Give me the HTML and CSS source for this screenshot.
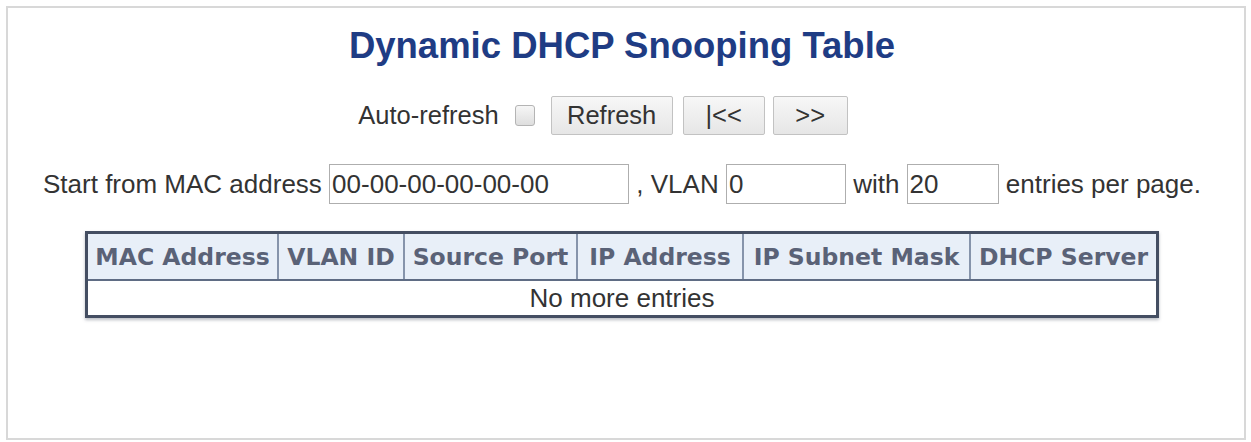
FILE: index.html
```html
<!DOCTYPE html>
<html lang="en">
<head>
<meta charset="utf-8">
<title>Dynamic DHCP Snooping Table</title>
<link rel="stylesheet" href="styles.css">
</head>
<body>
<div class="frame">
  <h1 class="title">Dynamic DHCP Snooping Table</h1>

  <div class="controls">
    <label class="auto">Auto-refresh <input type="checkbox" class="check"></label>
    <button class="btn btn-refresh" type="button">Refresh</button>
    <button class="btn btn-first" type="button">|&lt;&lt;</button>
    <button class="btn btn-next" type="button">&gt;&gt;</button>
  </div>

  <div class="paging">Start from MAC address <input class="field field-mac" type="text" value="00-00-00-00-00-00"> , VLAN <input class="field field-vlan" type="text" value="0"> with <input class="field field-count" type="text" value="20"> entries per page.</div>

  <table class="snoop">
    <thead>
      <tr>
        <th class="c-mac">MAC Address</th>
        <th class="c-vlan">VLAN ID</th>
        <th class="c-port">Source Port</th>
        <th class="c-ip">IP Address</th>
        <th class="c-mask">IP Subnet Mask</th>
        <th class="c-srv">DHCP Server</th>
      </tr>
    </thead>
    <tbody>
      <tr><td colspan="6" class="empty">No more entries</td></tr>
    </tbody>
  </table>
</div>
</body>
</html>
```

FILE: styles.css
```css
html, body {
  margin: 0;
  padding: 0;
  background: #ffffff;
}

body {
  font-family: "Liberation Sans", Arial, sans-serif;
  font-size: 26px;
  color: #333333;
}

.frame {
  margin: 6px;
  width: 1240px;
  height: 434px;
  box-sizing: border-box;
  border: 2px solid #d8d8d8;
  padding: 16px 8px 0 0;
  display: flex;
  flex-direction: column;
  align-items: center;
}

.title {
  margin: 0;
  font-size: 36.5px;
  line-height: 44px;
  font-weight: bold;
  color: #1f3c84;
}

/* refresh / paging buttons */
.controls {
  margin-top: 28px;
  padding-right: 38px;
  display: flex;
  align-items: center;
  height: 39px;
  font-size: 25.5px;
}

.auto {
  display: flex;
  align-items: center;
}

.check {
  appearance: none;
  -webkit-appearance: none;
  width: 20px;
  height: 21px;
  margin: 0 16px 0 16px;
  border: 1px solid #b4b4b4;
  border-radius: 3px;
  background: linear-gradient(#f6f6f6, #dedede);
  box-sizing: border-box;
}

.btn {
  height: 39px;
  box-sizing: border-box;
  border: 1px solid #c2c2c2;
  border-radius: 2px;
  background: linear-gradient(#f7f7f7, #e6e6e6);
  font-family: "Liberation Sans", Arial, sans-serif;
  font-size: 25.5px;
  color: #333333;
  padding: 0;
}

.btn-refresh { width: 122px; }
.btn-first   { width: 82px; margin-left: 10px; }
.btn-next    { width: 75px; margin-left: 8px; }

/* start address / vlan / page size line */
.paging {
  margin-top: 29px;
  white-space: nowrap;
  line-height: 40px;
  height: 40px;
}

.field {
  box-sizing: border-box;
  height: 40px;
  border: 1px solid #aeaeae;
  padding: 0 2px;
  font-family: "Liberation Sans", Arial, sans-serif;
  font-size: 26px;
  color: #333333;
  vertical-align: top;
  background: #ffffff;
}

.field-mac   { width: 300px; }
.field-vlan  { width: 120px; }
.field-count { width: 92px; }

/* result table */
.snoop {
  margin-top: 27px;
  border-collapse: collapse;
  border: 3px solid #444e62;
  box-shadow: 0 2px 3px rgba(60, 70, 90, 0.35);
}

.snoop th {
  height: 45px;
  padding: 0;
  background: #e8eff8;
  border: 2px solid #8694ab;
  border-bottom-color: #5f6c84;
  font-family: "DejaVu Sans", Verdana, sans-serif;
  font-size: 23.5px;
  font-weight: bold;
  color: #5a6277;
  text-align: center;
  white-space: nowrap;
}

.c-mac  { width: 189px; }
.c-vlan { width: 124px; }
.c-port { width: 171px; }
.c-ip   { width: 164px; }
.c-mask { width: 225px; }
.c-srv  { width: 185px; }

.snoop td.empty {
  height: 34px;
  padding: 0;
  text-align: center;
  background: #ffffff;
  color: #333333;
  font-size: 26px;
  line-height: 30px;
}
```
